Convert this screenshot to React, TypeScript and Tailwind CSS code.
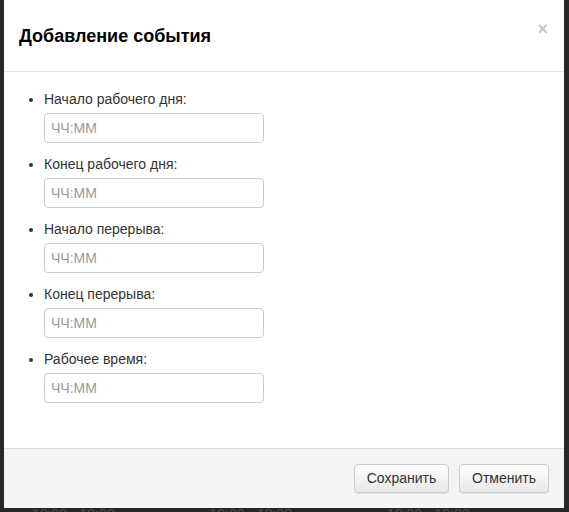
import React from 'react';

const fields = [
  'Начало рабочего дня:',
  'Конец рабочего дня:',
  'Начало перерыва:',
  'Конец перерыва:',
  'Рабочее время:',
];

const FooterButton = ({ label, width }: { label: string; width: string }) => (
  <button
    className={`h-[29px] ${width} rounded-[4px] border border-[#cccccc] bg-gradient-to-b from-white to-[#e8e8e8] text-[14px] text-[#333] shadow-[inset_0_1px_0_rgba(255,255,255,0.15),0_1px_1px_rgba(0,0,0,0.075)]`}
  >
    {label}
  </button>
);

export default function App() {
  return (
    <div
      className="relative h-[512px] w-[569px] overflow-hidden bg-[#282828]"
      style={{ fontFamily: '"Liberation Sans", Arial, sans-serif' }}
    >
      {/* page behind the modal */}
      <div className="flex gap-[95px] pl-[32px] pt-[506px] text-[14px] leading-[16px] text-[#4a4a4a]">
        <span>10:00 - 19:00</span>
        <span>10:00 - 19:00</span>
        <span>10:00 - 19:00</span>
      </div>

      {/* Modal */}
      <div className="absolute left-[4px] top-0 flex h-[508px] w-[560px] flex-col bg-white">
        <div className="flex h-[72px] items-center justify-between border-b border-[#e2e2e2] pl-[15px] pr-[16px]">
          <h4 className="text-[18px] font-bold leading-[20px] text-black">Добавление события</h4>
          <span className="-mt-[14px] text-[18px] font-bold leading-none text-[#c8c8c8]">×</span>
        </div>

        <div className="flex-1 pt-[17px]">
          <ul className="list-disc pl-[40px] text-[14px] leading-[20px] text-[#333]">
            {fields.map((f) => (
              <li key={f} className="mb-[11px]">
                <div className="mb-[4px]">{f}</div>
                <input
                  className="h-[30px] w-[220px] rounded-[4px] border border-[#cccccc] pl-[6px] text-[14px] text-[#555] placeholder:text-[#999] outline-none"
                  placeholder="ЧЧ:ММ"
                />
              </li>
            ))}
          </ul>
        </div>

        <div className="flex h-[60px] justify-end gap-[10px] border-t border-[#dddddd] bg-[#f4f4f4] pr-[15px] pt-[15px]">
          <FooterButton label="Сохранить" width="w-[95px]" />
          <FooterButton label="Отменить" width="w-[90px]" />
        </div>
      </div>
    </div>
  );
}
